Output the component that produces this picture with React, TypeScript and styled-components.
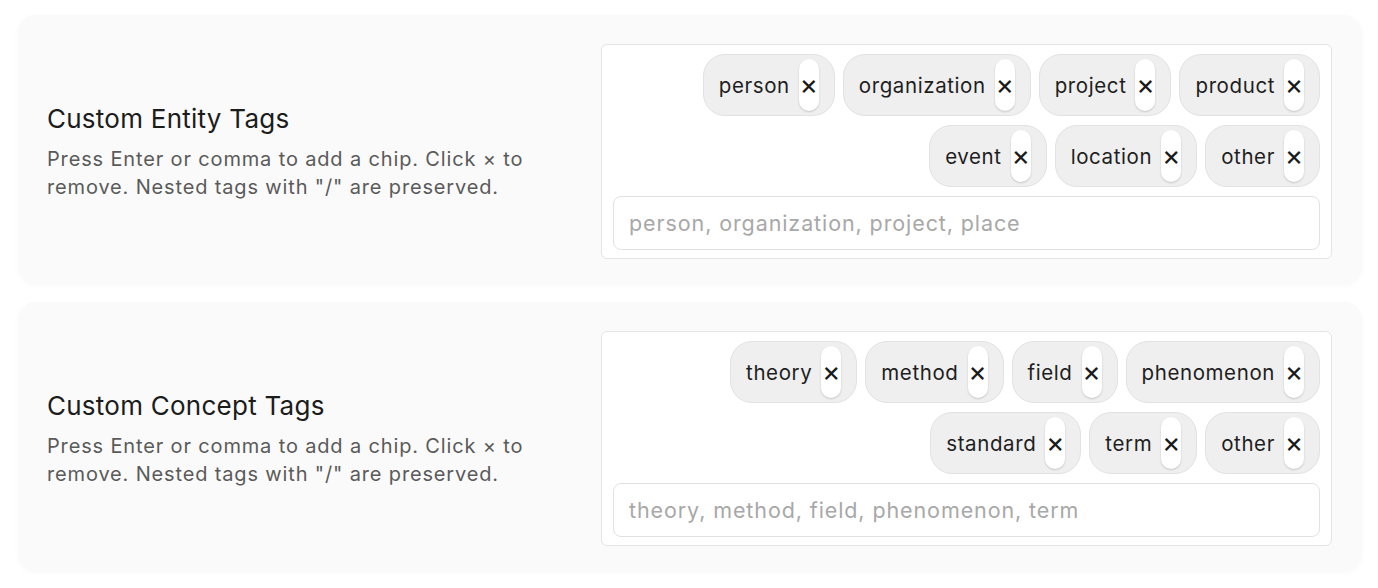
import React from "react";
import styled, { createGlobalStyle } from "styled-components";

const GlobalStyle = createGlobalStyle`
  html, body {
    margin: 0;
    background: #ffffff;
    font-family: Inter, "Noto Sans", "Liberation Sans", sans-serif;
    color: #1f1f1f;
  }
`;

type TagSection = {
  title: string;
  tags: string[][];
  placeholder: string;
};

const sections: TagSection[] = [
  {
    title: "Custom Entity Tags",
    tags: [
      ["person", "organization", "project", "product"],
      ["event", "location", "other"],
    ],
    placeholder: "person, organization, project, place",
  },
  {
    title: "Custom Concept Tags",
    tags: [
      ["theory", "method", "field", "phenomenon"],
      ["standard", "term", "other"],
    ],
    placeholder: "theory, method, field, phenomenon, term",
  },
];

const App: React.FunctionComponent<{}> = () => {
  return (
    <>
      <GlobalStyle />
      <PageStyled>
        {sections.map(section => (
          <CardStyled key={section.title}>
            <InfoStyled>
              <TitleStyled>{section.title}</TitleStyled>
              <HintStyled>
                Press Enter or comma to add a chip. Click × to remove. Nested
                tags with "/" are preserved.
              </HintStyled>
            </InfoStyled>

            <EditorStyled>
              {section.tags.map((row, i) => (
                <ChipRowStyled key={i}>
                  {row.map(tag => (
                    <ChipStyled key={tag}>
                      <span>{tag}</span>
                      <RemoveButton type="button" aria-label={`Remove ${tag}`}>
                        ×
                      </RemoveButton>
                    </ChipStyled>
                  ))}
                </ChipRowStyled>
              ))}
              <InputStyled placeholder={section.placeholder} />
            </EditorStyled>
          </CardStyled>
        ))}
      </PageStyled>
    </>
  );
};

const PageStyled = styled.div`
  display: flex;
  flex-direction: column;
  gap: 17px;
  padding: 15px 16px 13px 18px;
`;

const CardStyled = styled.section`
  display: flex;
  align-items: center;
  justify-content: space-between;
  height: 270px;
  box-sizing: border-box;
  padding: 0 30px 0 29px;
  background: #fafafa;
  border-radius: 18px;
  box-shadow: 0 1px 6px rgba(0, 0, 0, 0.025);
`;

const InfoStyled = styled.div`
  width: 500px;
  padding-top: 4px;
`;

const TitleStyled = styled.h3`
  margin: 0 0 11px;
  font-size: 26px;
  font-weight: 400;
  letter-spacing: 0.25px;
  line-height: 30px;
  color: #1c1c1c;
`;

const HintStyled = styled.p`
  margin: 0;
  font-size: 20px;
  letter-spacing: 0.85px;
  line-height: 28px;
  color: #5a5a5a;
`;

const EditorStyled = styled.div`
  width: 731px;
  box-sizing: border-box;
  display: flex;
  flex-direction: column;
  gap: 9px;
  margin-top: 3px;
  padding: 9px 11px 8px 11px;
  background: #ffffff;
  border: 1px solid #e4e4e4;
  border-radius: 6px;
`;

const ChipRowStyled = styled.div`
  display: flex;
  justify-content: flex-end;
  gap: 8px;
`;

const ChipStyled = styled.div`
  display: flex;
  align-items: center;
  gap: 9px;
  height: 62px;
  box-sizing: border-box;
  padding: 4px 15px 4px 15px;
  background: #efefef;
  border: 1px solid #e2e2e2;
  border-radius: 22px;
  font-size: 20.5px;
  letter-spacing: 0.6px;
  color: #1e1e1e;
`;

const RemoveButton = styled.button`
  align-self: stretch;
  width: 20px;
  padding: 0 0 3px;
  border: none;
  border-radius: 10px;
  background: #ffffff;
  box-shadow: 0 1px 2px rgba(0, 0, 0, 0.18);
  font-family: inherit;
  font-size: 28px;
  font-weight: 400;
  line-height: 1;
  color: #1a1a1a;
  cursor: pointer;
`;

const InputStyled = styled.input`
  height: 54px;
  box-sizing: border-box;
  padding: 0 15px;
  border: 1px solid #e2e2e2;
  border-radius: 8px;
  font-family: inherit;
  font-size: 21.5px;
  letter-spacing: 0.9px;
  color: #1e1e1e;
  outline: none;

  &::placeholder {
    color: #a8a8a8;
  }
`;

export default App;
